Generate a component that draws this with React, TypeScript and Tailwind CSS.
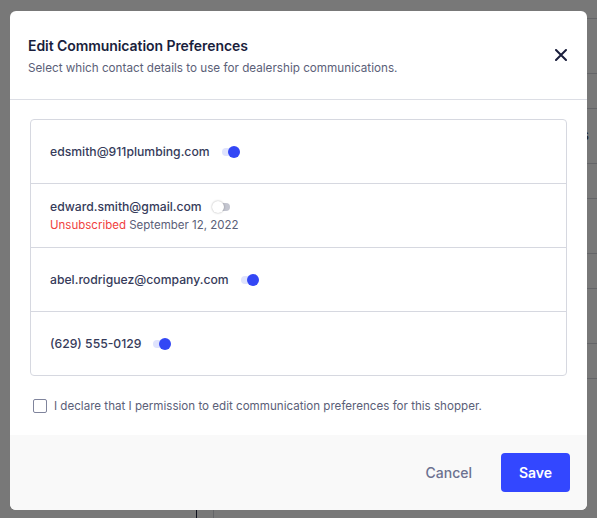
import React from 'react';

type Contact = {
  value: string;
  enabled: boolean;
  unsubscribed?: string;
};

const CONTACTS: Contact[] = [
  { value: 'edsmith@911plumbing.com', enabled: true },
  { value: 'edward.smith@gmail.com', enabled: false, unsubscribed: 'September 12, 2022' },
  { value: 'abel.rodriguez@company.com', enabled: true },
  { value: '(629) 555-0129', enabled: true },
];

const BG_ROWS = ['Transactions', 'Preview', 'Shopper', 'Options'];

function Toggle({ on, onChange }: { on: boolean; onChange: () => void }) {
  return (
    <button
      type="button"
      onClick={onChange}
      className="relative ml-[10px] flex h-[14px] w-[20px] shrink-0 items-center"
    >
      <span
        className={`absolute left-[2px] h-[8px] w-[16px] rounded-full ${on ? 'bg-[#dfe3fd]' : 'bg-[#c3c5cf]'}`}
      />
      <span
        className={`absolute top-[1px] h-[12px] w-[12px] rounded-full ${
          on ? 'left-[8px] bg-[#3347f5]' : 'left-0 bg-white shadow-[0_0_2px_rgba(0,0,0,0.35)]'
        }`}
      />
    </button>
  );
}

export default function App() {
  const [contacts, setContacts] = React.useState(CONTACTS);
  const [agreed, setAgreed] = React.useState(false);

  const toggle = (i: number) =>
    setContacts((prev) => prev.map((c, idx) => (idx === i ? { ...c, enabled: !c.enabled } : c)));

  return (
    <div className="relative h-[518px] w-[597px] overflow-hidden bg-white font-['Inter',sans-serif]">
      {/* page behind the dialog */}
      <div className="flex h-full pt-[18px]">
        <div className="w-[197px] shrink-0 border-r border-[#1b1f3b]" />
        <div className="w-[17px] shrink-0 border-r border-[#d4d6de]" />
        <div className="flex min-w-0 flex-1 flex-col overflow-hidden">
          <div className="h-[55px] border-t border-[#d4d6de]" />
          {BG_ROWS.map((label) => (
            <React.Fragment key={label}>
              <div className="h-[35px] border-t border-[#d4d6de]" />
              <div className="flex h-[55px] items-center border-t border-[#d4d6de] pl-[296px] text-[13px] text-[#333]">
                <span className="whitespace-nowrap">{label}</span>
              </div>
            </React.Fragment>
          ))}
        </div>
      </div>

      {/* overlay */}
      <div className="absolute inset-0 bg-black/[0.53]" />

      {/* dialog */}
      <div className="absolute left-[10px] top-[11px] flex h-[499px] w-[577px] flex-col overflow-hidden rounded-[6px] bg-white">
        <div className="flex items-start justify-between border-b border-[#dcdee5] pb-[23px] pl-[18px] pr-[15px] pt-[26px]">
          <div>
            <h2 className="text-[14px] font-semibold leading-[18px] tracking-[-0.005em] text-[#1a1e3c]">
              Edit Communication Preferences
            </h2>
            <p className="mt-[5px] text-[11.7px] leading-[16px] text-[#5b6078]">
              Select which contact details to use for dealership communications.
            </p>
          </div>
          <button type="button" className="mr-[5px] mt-[12px] text-[#1a1e3c]">
            <svg width="12" height="12" viewBox="0 0 12 12" fill="none">
              <path d="M1 1l10 10M11 1L1 11" stroke="currentColor" strokeWidth="2" strokeLinecap="round" />
            </svg>
          </button>
        </div>

        <div className="px-[20px] pt-[19px]">
          <div className="rounded-[4px] border border-[#d6d8e0]">
            {contacts.map((c, i) => (
              <div
                key={c.value}
                className={`flex flex-col justify-center px-[19px] ${i > 0 ? 'h-[64px] border-t border-[#d6d8e0]' : 'h-[63px]'}`}
              >
                <div className="flex items-center">
                  <span className="text-[12.2px] font-medium leading-[18px] text-[#363b5a]">{c.value}</span>
                  <Toggle on={c.enabled} onChange={() => toggle(i)} />
                </div>
                {c.unsubscribed && (
                  <div className="mt-[1px] text-[11.5px] leading-[16px] text-[#5b6078]">
                    <span className="text-[#f0413d]">Unsubscribed</span> {c.unsubscribed}
                  </div>
                )}
              </div>
            ))}
          </div>

          <label className="mt-[22px] flex cursor-pointer items-center pl-[3px]">
            <input
              type="checkbox"
              checked={agreed}
              onChange={(e) => setAgreed(e.target.checked)}
              className="sr-only"
            />
            <span
              className={`h-[14px] w-[14px] rounded-[2px] border-[1.5px] ${agreed ? 'border-[#3347f5] bg-[#3347f5]' : 'border-[#7f849c] bg-white'}`}
            />
            <span className="ml-[7px] text-[11.6px] leading-[16px] text-[#5b6078]">
              I declare that I permission to edit communication preferences for this shopper.
            </span>
          </label>
        </div>

        <div className="mt-auto flex h-[75px] items-center justify-end bg-[#f9f9f9] pr-[17px]">
          <button type="button" className="mr-[29px] text-[14px] font-medium text-[#6c7190]">
            Cancel
          </button>
          <button
            type="button"
            className="h-[39px] w-[69px] rounded-[4px] bg-[#3347ff] text-[14px] font-semibold text-white"
          >
            Save
          </button>
        </div>
      </div>
    </div>
  );
}
